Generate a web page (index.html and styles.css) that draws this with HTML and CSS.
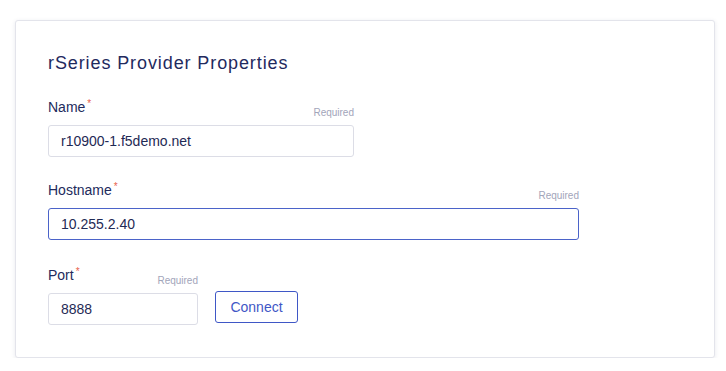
FILE: index.html
```html
<!DOCTYPE html>
<html lang="en">
<head>
<meta charset="utf-8">
<title>rSeries Provider Properties</title>
<link rel="stylesheet" href="styles.css">
</head>
<body>
  <section class="card">
    <h2 class="card-title">rSeries Provider Properties</h2>

    <div class="field field-name">
      <div class="label-row">
        <label class="label" for="name">Name<span class="req">*</span></label>
        <span class="hint">Required</span>
      </div>
      <input id="name" class="input" type="text" value="r10900-1.f5demo.net">
    </div>

    <div class="field field-host">
      <div class="label-row">
        <label class="label" for="host">Hostname<span class="req">*</span></label>
        <span class="hint">Required</span>
      </div>
      <input id="host" class="input input-focus" type="text" value="10.255.2.40">
    </div>

    <div class="port-row">
      <div class="field-port">
        <div class="label-row">
          <label class="label" for="port">Port<span class="req">*</span></label>
          <span class="hint">Required</span>
        </div>
        <input id="port" class="input" type="text" value="8888">
      </div>
      <button class="btn" type="button">Connect</button>
    </div>
  </section>
</body>
</html>
```

FILE: styles.css
```css
* { box-sizing: border-box; }

html, body {
  margin: 0;
  background: #ffffff;
}

body {
  font-family: "Liberation Sans", Arial, sans-serif;
  color: #222b5c;
}

.card {
  width: 700px;
  margin: 20px 0 0 15px;
  padding: 31px 32px 32px;
  background: #ffffff;
  border: 1px solid #e3e4eb;
  border-radius: 3px;
  box-shadow: 0 1px 4px rgba(30, 40, 90, 0.1);
}

.card-title {
  margin: 0;
  font-size: 18px;
  line-height: 22px;
  font-weight: normal;
  letter-spacing: 0.9px;
  color: #1f2a5e;
}

.field {
  margin-top: 24px;
}

.field-name { width: 306px; }
.field-host { width: 531px; }
.field-port { width: 150px; }

.label-row {
  display: flex;
  justify-content: space-between;
  align-items: flex-end;
  margin-bottom: 6px;
}

.label {
  font-size: 14px;
  line-height: 18px;
  margin-bottom: 3px;
  color: #222b5c;
}

.req {
  color: #e8624f;
  font-size: 10px;
  margin-left: 2px;
  vertical-align: 5px;
  line-height: 0;
}

.hint {
  font-size: 10px;
  line-height: 12px;
  color: #a2a5ba;
}

.input {
  display: block;
  width: 100%;
  height: 32px;
  padding: 0 12px;
  margin: 0;
  border: 1px solid #dcdde6;
  border-radius: 3px;
  background: #ffffff;
  font-family: "Liberation Sans", Arial, sans-serif;
  font-size: 14px;
  color: #1f2a55;
  outline: none;
}

.input-focus {
  border-color: #4b63c9;
}

.port-row {
  display: flex;
  align-items: flex-end;
  margin-top: 26px;
}

.btn {
  width: 83px;
  height: 32px;
  margin: 0 0 2px 17px;
  padding: 0;
  border: 1px solid #3f57c6;
  border-radius: 3px;
  background: #ffffff;
  font-family: "Liberation Sans", Arial, sans-serif;
  font-size: 14px;
  color: #3f57c6;
}
```
